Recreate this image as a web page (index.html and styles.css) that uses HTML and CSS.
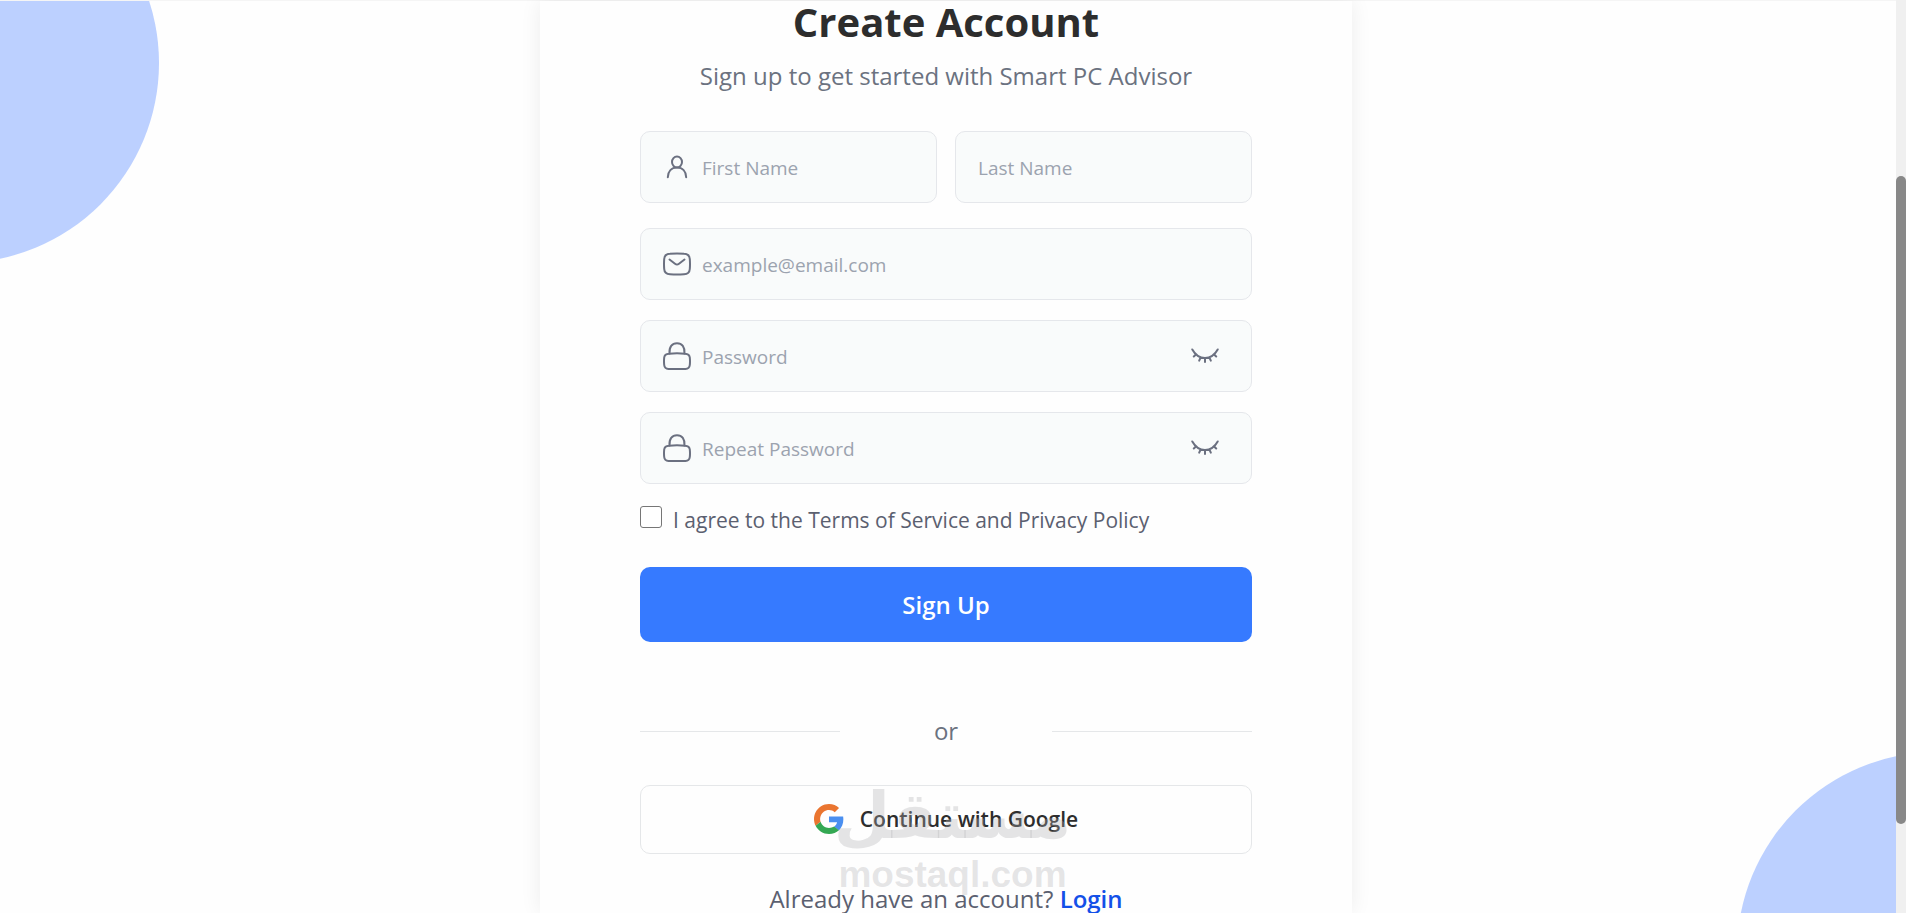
FILE: index.html
```html
<!DOCTYPE html>
<html lang="en">
<head>
  <meta charset="UTF-8">
  <meta name="viewport" content="width=device-width, initial-scale=1.0">
  <title>Create Account</title>
  <link rel="stylesheet" href="styles.css">
</head>
<body>
  <div class="circle circle-top"></div>
  <div class="circle circle-bottom"></div>

  <main class="page">
    <div class="card">
      <h1>Create Account</h1>
      <p class="subtitle">Sign up to get started with Smart PC Advisor</p>

      <form>
        <div class="name-row">
          <div class="field">
            <svg class="icon" viewBox="0 0 28 28" aria-hidden="true">
              <ellipse cx="14" cy="9" rx="5" ry="5.5"/>
              <path d="M4.800 24.200C5 18.500 8.500 14.500 14 14.500S23 18.500 23.200 24.200"/>
            </svg>
            <input type="text" name="firstName" placeholder="First Name" aria-label="First Name">
          </div>
          <div class="field">
            <input type="text" name="lastName" placeholder="Last Name" aria-label="Last Name">
          </div>
        </div>

        <div class="field">
          <svg class="icon" viewBox="0 0 28 28" aria-hidden="true">
            <path d="M7 3.800Q14 3 21 3.800Q26.500 4 26.800 9Q27.200 14 26.800 19Q26.500 24 21 24.200Q14 24.800 7 24.200Q1.500 24 1.200 19Q.8 14 1.200 9Q1.500 4 7 3.800Z"/>
            <path d="M6.500 9.500L12 13.700Q14 15.200 16 13.700L21.500 9.500"/>
          </svg>
          <input type="email" name="email" placeholder="example@email.com" aria-label="Email">
        </div>

        <div class="field">
          <svg class="icon" viewBox="0 0 28 28" aria-hidden="true">
            <path d="M6.500 11.500C6 5 9 1.200 14 1.200S22 5 21.500 11.500"/>
            <path d="M6 11.700Q14 10.900 22 11.700Q26.400 12 26.800 15.500Q27.200 19.500 26.800 23Q26.400 26.700 22.500 26.900H5.500Q1.600 26.700 1.200 23Q.8 19.500 1.200 15.500Q1.600 12 6 11.700Z"/>
          </svg>
          <input type="password" name="password" placeholder="Password" aria-label="Password">
          <button type="button" class="toggle" aria-label="Show password">
            <svg class="icon" viewBox="0 0 28 28" aria-hidden="true">
              <path d="M1.300 7.500C7.500 18.800 20.500 18.800 26.700 7.500M5.200 12.200L2.800 14.500M9.600 15.500L8.200 18.600M14 16.200V20M18.400 15.500L19.800 18.600M22.800 12.200L25.200 14.500"/>
            </svg>
          </button>
        </div>

        <div class="field">
          <svg class="icon" viewBox="0 0 28 28" aria-hidden="true">
            <path d="M6.500 11.500C6 5 9 1.200 14 1.200S22 5 21.500 11.500"/>
            <path d="M6 11.700Q14 10.900 22 11.700Q26.400 12 26.800 15.500Q27.200 19.500 26.800 23Q26.400 26.700 22.500 26.900H5.500Q1.600 26.700 1.200 23Q.8 19.500 1.200 15.500Q1.600 12 6 11.700Z"/>
          </svg>
          <input type="password" name="repeatPassword" placeholder="Repeat Password" aria-label="Repeat Password">
          <button type="button" class="toggle" aria-label="Show repeated password">
            <svg class="icon" viewBox="0 0 28 28" aria-hidden="true">
              <path d="M1.300 7.500C7.500 18.800 20.500 18.800 26.700 7.500M5.200 12.200L2.800 14.500M9.600 15.500L8.200 18.600M14 16.200V20M18.400 15.500L19.800 18.600M22.800 12.200L25.200 14.500"/>
            </svg>
          </button>
        </div>

        <div class="terms">
          <input type="checkbox" id="terms" name="terms">
          <label for="terms">I agree to the Terms of Service and Privacy Policy</label>
        </div>

        <button type="submit" class="btn-primary">Sign Up</button>
      </form>

      <div class="divider"><span>or</span></div>

      <button type="button" class="btn-google">
        <svg class="google-logo" viewBox="0 0 48 48" aria-hidden="true">
          <path fill="#ea7530" d="M24 9.500c3.540 0 6.710 1.220 9.210 3.600l6.850-6.850C35.900 2.380 30.470 0 24 0 14.620 0 6.510 5.380 2.560 13.220-.9 20-.8 28.500 2.560 34.780l7.970-6.190a14.500 14.500 0 0 1 0-9.180C12.430 13.720 17.740 9.500 24 9.500z"/>
          <path fill="#4a8ff0" d="M46.980 24.550c0-1.570-.15-3.090-.38-4.550H24v9.020h12.940c-.58 2.960-2.260 5.480-4.780 7.180l7.730 6c4.510-4.180 7.090-10.360 7.090-17.650z"/>
          <path fill="#34a853" d="M24 48c6.480 0 11.930-2.130 15.890-5.810l-7.730-6c-2.150 1.450-4.920 2.300-8.160 2.300-6.260 0-11.570-4.220-13.470-9.910l-7.980 6.190C6.510 42.620 14.620 48 24 48z"/>
        </svg>
        Continue with Google
      </button>

      <p class="login">Already have an account? <a href="#">Login</a></p>

      <div class="watermark" aria-hidden="true">
        <span class="watermark-ar" lang="ar">مستقل</span>
        <span class="watermark-en">mostaql.com</span>
      </div>
    </div>
  </main>

  <div class="scrollbar"><div class="thumb"></div></div>
</body>
</html>
```
FILE: styles.css
```css
* {
  box-sizing: border-box;
}
body {
  margin: 0;
  height: 100vh;
  overflow: hidden;
  position: relative;
  background-color: #fefefe;
  font-family: "Open Sans", "Noto Sans", sans-serif;
  color: #6b7280;
}
button, input {
  font-family: inherit;
}
h1, p {
  margin: 0;
}

/* background shapes */
.circle {
  position: absolute;
  width: 400px;
  height: 400px;
  border-radius: 50%;
  background-color: #bcd0ff;
}
.circle-top {
  top: -137px;
  left: -241px;
}
.circle-bottom {
  bottom: -239px;
  right: -231px;
}

.page {
  position: relative;
  display: flex;
  justify-content: center;
  height: 100%;
  padding-right: 14px;
  border-top: 1px solid #f5f5f5;
}
.card {
  position: relative;
  width: 812px;
  max-width: 100%;
  height: 100%;
  padding: 0 100px;
  background-color: #fefefe;
  box-shadow: 0 0 20px rgba(0, 0, 0, 0.07);
  text-align: center;
}
h1 {
  font-size: 40px;
  line-height: 42px;
  font-weight: 700;
  color: #2d2d2d;
}
.subtitle {
  margin: 17px 0 39px;
  font-size: 24px;
  line-height: 32px;
}

/* form */
form {
  display: flex;
  flex-direction: column;
  gap: 20px;
}
.name-row {
  display: grid;
  grid-template-columns: 1fr 1fr;
  gap: 18px;
  margin-bottom: 5px;
}
.field {
  display: flex;
  align-items: center;
  gap: 11px;
  height: 72px;
  min-width: 0;
  padding: 0 32px 0 22px;
  background-color: #f9fbfb;
  border: 1px solid #e5e7eb;
  border-radius: 10px;
}
.icon {
  flex: none;
  display: block;
  width: 28px;
  height: 28px;
  fill: none;
  stroke: #6b7080;
  stroke-width: 2;
  stroke-linecap: round;
}
.field input {
  flex: 1;
  min-width: 0;
  padding: 2px 0 0;
  border: none;
  outline: none;
  background: none;
  font-size: 19px;
  line-height: 28px;
  color: #2d2d2d;
}
.field input::placeholder {
  color: #9ca3af;
  opacity: 1;
}
.toggle {
  padding: 0;
  border: none;
  background: none;
  cursor: pointer;
}
.terms {
  display: flex;
  align-items: center;
  gap: 11px;
  height: 32px;
  text-align: left;
  font-size: 21px;
  color: #5b6070;
}
.terms input {
  appearance: none;
  width: 22px;
  height: 22px;
  margin: 0 0 6px;
  border: 1px solid #767676;
  border-radius: 3px;
  background-color: #fff;
}
.terms input:checked {
  background-color: #367aff;
}
.btn-primary {
  height: 75px;
  margin-top: 11px;
  border: none;
  border-radius: 10px;
  background-color: #367aff;
  color: #fff;
  font-size: 24px;
  font-weight: 600;
  cursor: pointer;
}
.divider {
  display: flex;
  align-items: center;
  justify-content: space-between;
  margin: 73px 0 38px;
  font-size: 24px;
  line-height: 32px;
}
.divider::before,
.divider::after {
  content: "";
  width: 200px;
  height: 1px;
  background-color: #e5e7e9;
}
.btn-google {
  display: flex;
  align-items: center;
  justify-content: center;
  gap: 16px;
  width: 100%;
  height: 69px;
  padding: 0 0 2px;
  border: 1px solid #e5e7e9;
  border-radius: 10px;
  background-color: #fefefe;
  color: #2d2d2d;
  font-size: 21px;
  font-weight: 600;
  cursor: pointer;
}
.google-logo {
  width: 30px;
  height: 30px;
}
.login {
  margin-top: 29px;
  font-size: 24px;
  line-height: 32px;
  color: #5b6070;
}
.login a {
  color: #1350e8;
  font-weight: 600;
  text-decoration: none;
}

/* watermark over the bottom of the card */
.watermark {
  position: absolute;
  top: 770px;
  left: 0;
  right: 0;
  padding-left: 13px;
  display: flex;
  flex-direction: column;
  align-items: center;
  color: rgba(176, 176, 180, 0.33);
  font-weight: 700;
  pointer-events: none;
}
.watermark-ar {
  font-family: "DejaVu Sans", sans-serif;
  font-size: 65px;
  line-height: 90px;
}
.watermark-en {
  font-family: "Liberation Sans", Arial, sans-serif;
  font-size: 37px;
  line-height: 28px;
}

.scrollbar {
  position: absolute;
  top: 0;
  right: 0;
  bottom: 0;
  width: 10px;
  background-color: #f0f0f0;
}
.thumb {
  height: 71%;
  margin-top: 176px;
  border-radius: 5px;
  background-color: #888;
}
```
